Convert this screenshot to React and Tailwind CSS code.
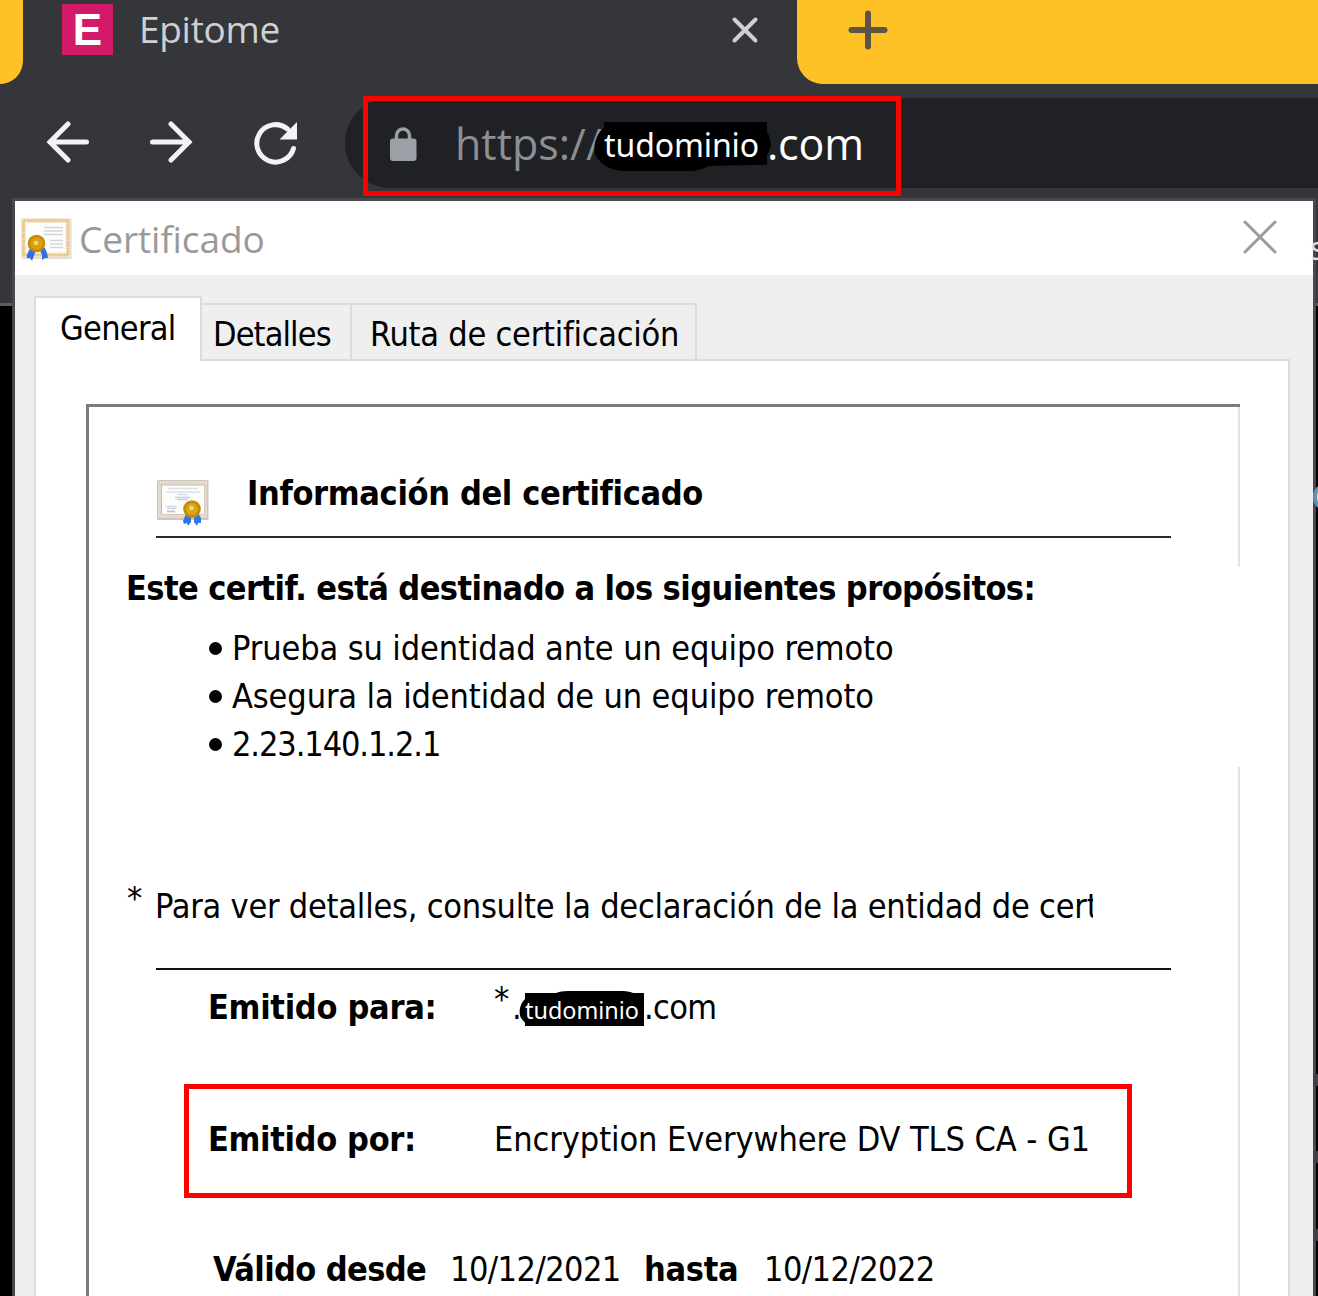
const dialogFont = "font-['DejaVu_Sans_Condensed','DejaVu_Sans',sans-serif]";

function SmallCertificate() {
  return (
    <svg width="52" height="46" viewBox="0 0 52 46" className="shrink-0">
      <rect x="1.5" y="2" width="49" height="40" fill="#bdb8b0" opacity="0.5" />
      <rect x="0" y="1" width="49.5" height="39.5" fill="#f3e6d2" />
      <rect x="2.5" y="3.5" width="44.5" height="34.5" fill="none" stroke="#e9bd78" strokeWidth="2.6" strokeDasharray="1.6 0.8" />
      <rect x="5" y="6" width="39.5" height="29.5" fill="#fdfdfc" />
      <path d="M23 10.5h19M23 14h19M23 17.5h19M29 23.500h13M29 27h13M29 30.500h13" stroke="#d6d6d6" strokeWidth="1.5" />
      <path d="M9 31 6 38l0 3 3 0 2 3 4-11zM18 31l3 7 0 5 3-2 3 0-1-5-2-5z" fill="#2f6fe6" />
      <circle cx="15.500" cy="26.500" r="8.800" fill="#c58a05" />
      <circle cx="15.500" cy="26.500" r="6.200" fill="#daa20c" />
      <circle cx="15" cy="26" r="2.200" fill="#f3d77c" />
    </svg>
  );
}

function LargeCertificate() {
  return (
    <svg width="54" height="48" viewBox="0 0 54 48" className="shrink-0">
      <rect x="1" y="1" width="51.500" height="40" rx="1.500" fill="#cfc6b8" />
      <rect x="2" y="2" width="49" height="37" fill="#e3dacd" />
      <rect x="5" y="5.500" width="43.500" height="30" fill="#c4bbae" />
      <rect x="6" y="6.500" width="42" height="28.500" fill="#fcfdfd" />
      <path d="M12 9.500h30M10 13h34M21 15.500h11" stroke="#d9e0ea" strokeWidth="1.300" />
      <path d="M19 18.500h15M21 20.500h11" stroke="#c6cfe4" strokeWidth="1.400" />
      <path d="M10 27.500h11M11 29.500h9" stroke="#d5d8e4" strokeWidth="1.300" />
      <path d="M11 32.500h8" stroke="#b4bfd8" strokeWidth="1.600" />
      <path d="m30 35-3 7 1 3 3-1 1 3 3-4v-7zM38 36l0 7 3 4 1-3 3 0 0-5-3-5z" fill="#2f76ea" />
      <circle cx="36" cy="30" r="8.800" fill="#c48c06" />
      <circle cx="36" cy="30" r="6" fill="#dba618" />
      <circle cx="35.500" cy="29" r="2.200" fill="#f2d887" />
    </svg>
  );
}

function TabStrip() {
  return (
    <div className="flex h-[84px] font-['Open_Sans',sans-serif]">
      <div className="w-[23px] rounded-br-[24px] bg-[#ffc226]" />
      <div className="flex flex-1 items-start pl-[39px]">
        <div className="mt-1 flex h-[51px] w-[51px] items-center justify-center bg-[#d31a69] font-['Liberation_Sans',sans-serif] text-[44px] font-bold leading-none text-white">
          <span>E</span>
        </div>
        <span className="ml-[26px] mt-px text-[37px] leading-[56px] tracking-[-0.3px] text-[#cfd0d2]">Epitome</span>
        <svg width="30" height="30" viewBox="0 0 30 30" className="ml-auto mr-[37px] mt-[15px]">
          <path d="M4.500 4.500 25.500 25.500M25.500 4.500 4.500 25.500" stroke="#cfd0d2" strokeWidth="4" strokeLinecap="round" />
        </svg>
      </div>
      <div className="w-[521px] rounded-bl-[26px] bg-[#ffc226] pl-[51px] pt-[10px]">
        <svg width="40" height="40" viewBox="0 0 40 40">
          <path d="M20 3.500v33M3.500 20h33" stroke="#5c5546" strokeWidth="6" strokeLinecap="round" />
        </svg>
      </div>
    </div>
  );
}

function Toolbar() {
  return (
    <div className="flex h-[117px] items-start pl-[46px] pt-[14px]">
      <svg width="43" height="42" viewBox="0 0 43 42" className="mt-[23px]" fill="none" stroke="#f1f3f4" strokeWidth="5" strokeLinecap="round">
        <path d="M40.500 21H4M22 3 4 21l18 18" />
      </svg>
      <svg width="43" height="42" viewBox="0 0 43 42" className="ml-[61px] mt-[23px]" fill="none" stroke="#f1f3f4" strokeWidth="5" strokeLinecap="round">
        <path d="M2.500 21H39M21 3l18 18-18 18" />
      </svg>
      <svg width="46" height="44" viewBox="0 0 46 44" className="ml-[59px] mt-[23px]">
        <path d="M41.500 27.500A18.700 18.700 0 1 1 35.500 8" fill="none" stroke="#f1f3f4" strokeWidth="5" strokeLinecap="round" />
        <path d="M45 1v17.500H27.500z" fill="#f1f3f4" />
      </svg>
      <div className="relative ml-[47px] flex h-[90px] flex-1 items-start rounded-l-full bg-[#202124] pl-[44px] font-['Open_Sans',sans-serif] text-[43px] leading-[60px]">
        <svg width="28" height="36" viewBox="0 0 28 36" className="mt-[28px]">
          <path d="M7.500 14V9.500a6.500 6.500 0 0 1 13 0V14" fill="none" stroke="#9aa0a6" strokeWidth="3.500" />
          <rect x="1" y="12.500" width="26.500" height="22.500" rx="3" fill="#9aa0a6" />
        </svg>
        <span className="ml-[38px] mt-[16px] w-[149px] text-[#8b8f94]">https://</span>
        <span className="relative mt-[24px] h-[43px] w-[163px] bg-black">
          <svg width="178" height="50" viewBox="0 0 178 50" className="absolute -left-[10px] top-0">
            <path d="M12 4C2 11-1 23 1 32c4 9 14 16 27 17h65c10 0 16-2 22-5l40-1c12-2 20-9 22-20 0-7-3-12-6-15z" fill="#000" />
          </svg>
          <span className="relative block font-['Noto_Sans',sans-serif] text-[32px] leading-[46px] tracking-[-0.1px] text-white">tudominio</span>
        </span>
        <span className="relative mt-[16px] tracking-[-0.2px] text-white">.com</span>
        <div className="absolute -top-[2px] left-[18px] h-[100px] w-[538px] border-[5px] border-[#fe0000]" />
      </div>
    </div>
  );
}

const purposes = [
  { text: "Prueba su identidad ante un equipo remoto", className: "ml-[10px] tracking-[-0.12px]" },
  { text: "Asegura la identidad de un equipo remoto", className: "ml-[10px] tracking-[-0.12px]" },
  { text: "2.23.140.1.2.1", className: "ml-[10px] tracking-[-1.1px]" },
];

function CertificateBody() {
  return (
    <div className="relative ml-[50px] mt-[43px] h-[892px] w-[1154px] border-l-[3px] border-t-[3px] border-[#7b7b7b]">
      <div className="absolute right-0 top-0 h-[160px] w-[2px] bg-[#e3e3e3]" />
      <div className="absolute right-0 top-[360px] h-[540px] w-[2px] bg-[#e3e3e3]" />

      <div className="ml-[67px] mr-[69px] flex h-[131px] items-start border-b-2 border-[#2a2a2a] pt-[66px]">
        <div className="pt-[6px]"><LargeCertificate /></div>
        <h1 className="ml-[37px] font-bold tracking-[-0.35px]">Información del certificado</h1>
      </div>

      <h2 className="ml-[37px] mt-[30px] font-bold tracking-[-0.58px]">Este certif. está destinado a los siguientes propósitos:</h2>
      <ul className="ml-[120px] mt-[20px] flex flex-col gap-[8px]">
        {purposes.map(({ text, className }) => (
          <li key={text} className="flex items-center">
            <span className="h-[13px] w-[13px] rounded-full bg-black" />
            <span className={className}>{text}</span>
          </li>
        ))}
      </ul>

      <div className="ml-[38px] mt-[122px] flex w-[966px] overflow-hidden whitespace-nowrap">
        <span className="relative -top-[8px] w-[28px] shrink-0">*</span>
        <span className="tracking-[-0.23px]">Para ver detalles, consulte la declaración de la entidad de cert</span>
      </div>

      <div className="ml-[67px] mr-[69px] mt-[42px] h-[2px] bg-[#111]" />

      <div className="ml-[119px] mt-[17px] flex">
        <span className="w-[286px] font-bold tracking-[-0.3px]">Emitido para:</span>
        <span className="relative -top-[8px] w-[18px]">*</span>
        <span className="w-[13px]">.</span>
        <span className="relative mt-[6px] h-[33px] w-[119px] bg-black">
          <svg width="125" height="37" viewBox="0 0 125 37" className="absolute -left-[6px] -top-[2px]">
            <path d="M7 7C1 12-1 21 2 27l5 6h26q10 4 20 0h65V4q-6-4-15-4H49q-9 0-14 3z" fill="#000" />
          </svg>
          <span className="relative block font-['Noto_Sans',sans-serif] text-[23.400px] leading-[34px] text-white">tudominio</span>
        </span>
        <span className="tracking-[-0.7px]">.com</span>
      </div>

      <div className="ml-[95px] mt-[57px] flex h-[114px] w-[948px] items-start border-[5px] border-[#fe0000] pl-[19px] pt-[30px]">
        <span className="w-[286px] font-bold tracking-[-0.35px]">Emitido por:</span>
        <span className="tracking-[-0.08px]">Encryption Everywhere DV TLS CA - G1</span>
      </div>

      <div className="ml-[124px] mt-[51px] flex whitespace-nowrap">
        <span className="w-[237px] font-bold tracking-[-0.6px]">Válido desde</span>
        <span className="w-[194px] tracking-[-0.55px]">10/12/2021</span>
        <span className="w-[120px] font-bold tracking-[-0.3px]">hasta</span>
        <span className="tracking-[-0.55px]">10/12/2022</span>
      </div>
    </div>
  );
}

function CertificateWindow() {
  return (
    <div className="absolute left-[12px] top-[198px] h-[1110px] w-[1304px] border-[3px] border-[#48494c] bg-[#efefef]">
      <div className="flex h-[74px] items-start bg-white pl-[6px] pt-[16px]">
        <SmallCertificate />
        <span className="-mt-[6px] ml-[6px] font-['Open_Sans',sans-serif] text-[37px] leading-[56px] tracking-[-0.1px] text-[#999]">Certificado</span>
        <svg width="36" height="36" viewBox="0 0 36 36" className="ml-auto mr-[35px] mt-[2px]">
          <path d="M3 3 33 33M33 3 3 33" stroke="#999b9a" strokeWidth="3" strokeLinecap="round" />
        </svg>
      </div>
      <div className={dialogFont + " ml-[19px] mt-[21px] text-[34px] leading-[40px] text-black"}>
        <div className="relative z-10 flex items-end">
          <div className="-mb-[2px] h-[65px] w-[168px] border-x-2 border-t-2 border-[#dcdcdc] bg-white pl-[24px] pt-[10px] tracking-[-0.7px]">General</div>
          <div className="h-[56px] w-[150px] border-r-2 border-t-2 border-[#dcdcdc] pl-[11px] pt-[9px] tracking-[-0.9px]">Detalles</div>
          <div className="h-[56px] w-[345px] whitespace-nowrap border-r-2 border-t-2 border-[#dcdcdc] pl-[18px] pt-[9px] tracking-[-0.25px]">Ruta de certificación</div>
        </div>
        <div className="flow-root h-[945px] w-[1256px] border-2 border-[#dcdcdc] bg-white">
          <CertificateBody />
        </div>
      </div>
    </div>
  );
}

export default function App() {
  return (
    <div className="relative h-[1296px] w-[1318px] overflow-hidden bg-[#35363a]">
      <TabStrip />
      <Toolbar />
      <div className="mt-[102px] h-[1000px] border-t-[3px] border-[#5c5d60] bg-black" />
      <CertificateWindow />
      <div className="absolute left-[1310px] top-[228px] font-['Open_Sans',sans-serif] text-[32px] leading-[40px] text-[#dfe1e5]">s</div>
      <div className="absolute left-[1313px] top-[484px] h-[26px] w-[24px] rounded-full border-[4px] border-[#5f93b5] bg-[#e8dcb8]" />
      <div className="absolute left-[1313px] top-[1074px] h-[12px] w-[5px] bg-[#404145]" />
      <div className="absolute left-[1313px] top-[1151px] h-[12px] w-[5px] bg-[#404145]" />
      <div className="absolute left-[1313px] top-[1229px] h-[12px] w-[5px] bg-[#404145]" />
    </div>
  );
}
